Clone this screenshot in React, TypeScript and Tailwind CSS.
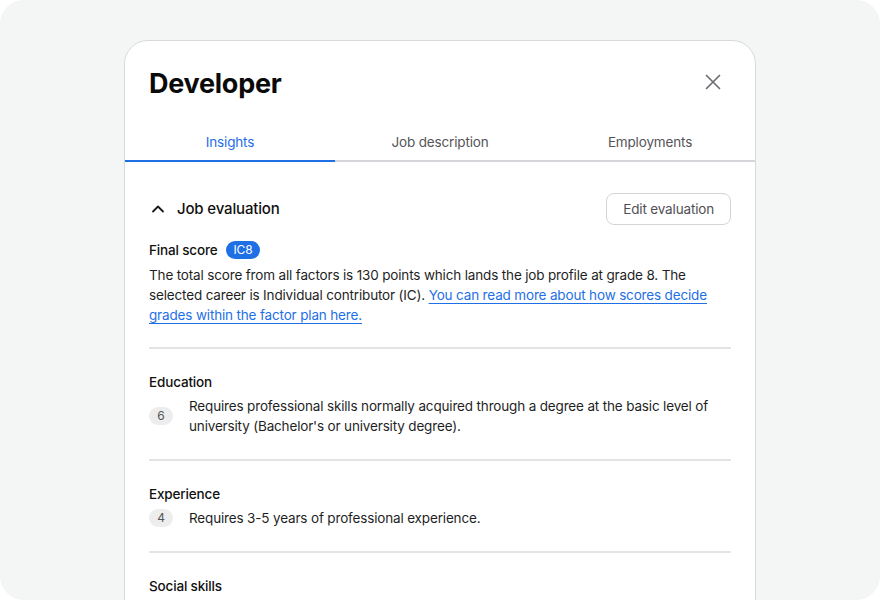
import React from 'react';

const factors = [
  {
    label: 'Education',
    score: 6,
    text: "Requires professional skills normally acquired through a degree at the basic level of university (Bachelor's or university degree).",
  },
  { label: 'Experience', score: 4, text: 'Requires 3-5 years of professional experience.' },
  { label: 'Social skills', score: 5, text: 'Requires the ability to communicate clearly with colleagues and stakeholders.' },
];

function CloseIcon() {
  return (
    <svg width="16" height="16" viewBox="0 0 16 16" fill="none" aria-hidden>
      <path d="M1.5 1.5L14.5 14.5M14.5 1.5L1.5 14.5" stroke="#6e6e73" strokeWidth="1.7" strokeLinecap="round" />
    </svg>
  );
}

function ChevronUpIcon() {
  return (
    <svg width="14" height="14" viewBox="0 0 14 14" fill="none" aria-hidden>
      <path d="M2 9.5L7 4.5L12 9.5" stroke="#1a1a1a" strokeWidth="1.8" strokeLinecap="round" strokeLinejoin="round" />
    </svg>
  );
}

export default function App() {
  const tabs = ['Insights', 'Job description', 'Employments'];
  return (
    <div className="bg-white" style={{ fontFamily: 'Inter, "Noto Sans", sans-serif' }}>
      <div className="h-[600px] overflow-hidden rounded-[24px] bg-[#f4f5f5] pt-10">
        <div className="ml-[124px] w-[632px] rounded-t-[24px] border border-[#d9d9dc] bg-white">
          <div className="flex items-center justify-between px-6 pt-[25px]">
            <h1 className="text-[27px] font-bold leading-9 tracking-[-0.01em] text-[#0a0a0a]">Developer</h1>
            <button className="mb-1 mr-0.5 flex h-8 w-8 items-center justify-center">
              <CloseIcon />
            </button>
          </div>

          <div className="mt-5 flex border-b-2 border-[#d6d6da] tracking-[-0.01em]">
            {tabs.map((tab, i) => (
              <button
                key={tab}
                className={`-mb-[2px] flex h-10 flex-1 items-center justify-center border-b-2 pt-0.5 text-[13.5px] ${
                  i === 0 ? 'border-[#1f6fe5] text-[#1f6fe5]' : 'border-transparent text-[#555558]'
                }`}
              >
                {tab}
              </button>
            ))}
          </div>

          <div className="px-6 pt-[31px] tracking-[-0.01em]">
            <div className="flex h-8 items-center justify-between">
              <div className="flex items-center gap-3 pl-[2px]">
                <ChevronUpIcon />
                <span className="text-[15px] font-medium text-[#111]">Job evaluation</span>
              </div>
              <button className="flex h-8 items-center rounded-lg border border-[#d4d4d8] px-4 text-[13.5px] text-[#505054]">
                Edit evaluation
              </button>
            </div>

            <div className="mt-[15px] flex items-center gap-2">
              <span className="text-[13.5px] font-medium leading-5 text-[#111]">Final score</span>
              <span className="flex h-[18px] items-center rounded-full bg-[#1f6fe5] px-2 text-xs text-white">IC8</span>
            </div>
            <p className="mt-[5px] text-[13.5px] leading-5 text-[#1f1f1f]">
              The total score from all factors is 130 points which lands the job profile at grade 8. The selected career
              is Individual contributor (IC).{' '}
              <a href="#" className="text-[#1f6fe5] underline decoration-1 underline-offset-[3px]">
                You can read more about how scores decide grades within the factor plan here.
              </a>
            </p>
            <div className="pb-[22px]" />

            {factors.map((f) => (
              <div key={f.label} className="border-t-2 border-[#e4e4e6] pb-[23px] pt-[23px]">
                <div className="text-[13.5px] font-medium leading-5 text-[#111]">{f.label}</div>
                <div className="mt-1 flex items-center gap-4">
                  <span className="flex h-[18px] w-6 shrink-0 items-center justify-center rounded-full bg-[#ededee] text-xs text-[#555558]">
                    {f.score}
                  </span>
                  <p className="text-[13.5px] leading-5 text-[#1f1f1f]">{f.text}</p>
                </div>
              </div>
            ))}
          </div>
        </div>
      </div>
    </div>
  );
}
